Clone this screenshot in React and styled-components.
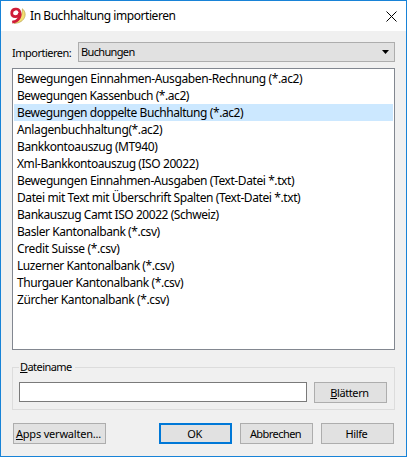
import React from 'react';
import styled, { createGlobalStyle } from 'styled-components';

const GlobalStyle = createGlobalStyle`
  *, *::before, *::after { box-sizing: border-box; }
  body { margin: 0; }
`;

const Dialog = styled.div`
  display: flex;
  flex-direction: column;
  width: 407px;
  height: 457px;
  overflow: hidden;
  border: 1px solid #1883d7;
  background: #f0f0f0;
  color: #000;
  font: 12px/16px "Noto Sans", "Open Sans", sans-serif;
  white-space: nowrap;
`;

const TitleBar = styled.header`
  display: flex;
  align-items: center;
  height: 30px;
  padding: 0 9px 0 8px;
  background: #fff;
`;

const Title = styled.h1`
  flex: 1;
  margin: 0 0 0 3px;
  font-size: 12px;
  font-weight: 400;
  letter-spacing: ${(p) => p.$spacing}px;
`;

const CloseButton = styled.button`
  display: flex;
  padding: 0;
  border: 0;
  background: none;
`;

const Content = styled.main`
  padding: 11px 11px 0;
`;

const TypeRow = styled.div`
  display: flex;
  align-items: center;
  height: 20px;
`;

const Text = styled.span`
  font-size: 11px;
  letter-spacing: ${(p) => p.$spacing ?? -0.55}px;
`;

const FieldLabel = styled.label`
  width: 66px;
  display: flex;
  padding-top: 1px;
`;

const Select = styled.div`
  display: flex;
  align-items: center;
  justify-content: space-between;
  width: 317px;
  height: 20px;
  padding: 0 5px 0 2px;
  border: 1px solid #adadad;
  background: #e1e1e1;
`;

const List = styled.ul`
  width: 383px;
  height: 282px;
  margin: 6px 0 0;
  padding: 1px;
  list-style: none;
  border: 1px solid #828790;
  background: #fff;
`;

const ListRow = styled.li`
  height: 17px;
  padding-left: 3px;
  line-height: 17px;
  letter-spacing: ${(p) => p.$spacing}px;
  background: ${(p) => (p.$selected ? '#cce8ff' : 'transparent')};
`;

const FileGroup = styled.fieldset`
  display: flex;
  align-items: flex-start;
  gap: 7px;
  width: 383px;
  height: 51px;
  margin: 9px 0 0;
  padding: 6px 6px 0;
  border: 1px solid #dcdcdc;
`;

const Legend = styled.legend`
  display: flex;
  height: 17px;
  padding: 0 3px 0 1px;
`;

const FileInput = styled.input`
  width: 288px;
  height: 20px;
  padding: 0 4px;
  border: 1px solid #7a7a7a;
  background: #fff;
`;

const Button = styled.button`
  display: flex;
  align-items: center;
  justify-content: center;
  flex-shrink: 0;
  width: ${(p) => p.$width || 73}px;
  height: 21px;
  padding: 0 2px 0 0;
  border: ${(p) => (p.$primary ? '2px solid #0078d7' : '1px solid #adadad')};
  background: #e1e1e1;
  color: #000;
  font: 11px/16px "Noto Sans", "Open Sans", sans-serif;
`;

const Mnemonic = styled.span`
  text-decoration: underline;
  text-decoration-thickness: 1px;
  text-underline-offset: 1px;
  text-decoration-skip-ink: none;
`;

const Footer = styled.footer`
  display: flex;
  gap: 8px;
  width: 381px;
  margin: 13px 0 0 1px;
`;

const Spacer = styled.div`
  flex: 1;
`;

const entries = [
  ['Bewegungen Einnahmen-Ausgaben-Rechnung (*.ac2)', -0.37],
  ['Bewegungen Kassenbuch (*.ac2)', -0.44],
  ['Bewegungen doppelte Buchhaltung (*.ac2)', -0.42],
  ['Anlagenbuchhaltung(*.ac2)', -0.38],
  ['Bankkontoauszug (MT940)', -0.41],
  ['Xml-Bankkontoauszug (ISO 20022)', -0.42],
  ['Bewegungen Einnahmen-Ausgaben (Text-Datei *.txt)', -0.41],
  ['Datei mit Text mit Überschrift Spalten (Text-Datei *.txt)', -0.4],
  ['Bankauszug Camt ISO 20022 (Schweiz)', -0.45],
  ['Basler Kantonalbank (*.csv)', -0.43],
  ['Credit Suisse (*.csv)', -0.36],
  ['Luzerner Kantonalbank (*.csv)', -0.43],
  ['Thurgauer Kantonalbank (*.csv)', -0.42],
  ['Zürcher Kantonalbank (*.csv)', -0.4],
];

function AppLogo() {
  return (
    <svg width="18" height="18" viewBox="0 0 18 18" fill="none">
      <path d="M13.4 1.8C18.6 6 16.6 15.8 5.2 16.4C10.6 13.8 13.6 8.4 13.4 1.8Z" fill="#f3df70" stroke="#bfa858" strokeWidth=".8" />
      <path d="M10.6 6.2C9.8 10.6 2.9 10.8 2.7 6.4C2.5 1.2 9.6.6 10.8 4.8C12.2 9.4 9.4 14.4 3.2 15.2" stroke="#cf1c38" strokeWidth="2.7" />
    </svg>
  );
}

export default function App() {
  return (
    <>
      <GlobalStyle />
      <Dialog>
        <TitleBar>
          <AppLogo />
          <Title $spacing={-0.44}>In Buchhaltung importieren</Title>
          <CloseButton aria-label="Schließen">
            <svg width="11" height="11" viewBox="0 0 11 11" stroke="#000" strokeWidth="1">
              <path d="M.5 .5L10.5 10.5M10.5 .5L.5 10.5" />
            </svg>
          </CloseButton>
        </TitleBar>
        <Content>
          <TypeRow>
            <FieldLabel><Text $spacing={-0.5}>Importieren:</Text></FieldLabel>
            <Select>
              <Text $spacing={-0.65}>Buchungen</Text>
              <svg width="7" height="4" viewBox="0 0 7 4"><path d="M0 0H7L3.5 4Z" /></svg>
            </Select>
          </TypeRow>
          <List>
            {entries.map(([label, spacing], index) => (
              <ListRow key={label} $spacing={spacing} $selected={index === 2}>{label}</ListRow>
            ))}
          </List>
          <FileGroup>
            <Legend><Text><Mnemonic>D</Mnemonic>ateiname</Text></Legend>
            <FileInput aria-label="Dateiname" />
            <Button><Text $spacing={-0.4}><Mnemonic>B</Mnemonic>lättern</Text></Button>
          </FileGroup>
          <Footer>
            <Button $width={93}><Text $spacing={-0.2}><Mnemonic>A</Mnemonic>pps verwalten...</Text></Button>
            <Spacer />
            <Button $primary><Text>OK</Text></Button>
            <Button><Text>Abbrechen</Text></Button>
            <Button><Text $spacing={-0.4}>Hilfe</Text></Button>
          </Footer>
        </Content>
      </Dialog>
    </>
  );
}
